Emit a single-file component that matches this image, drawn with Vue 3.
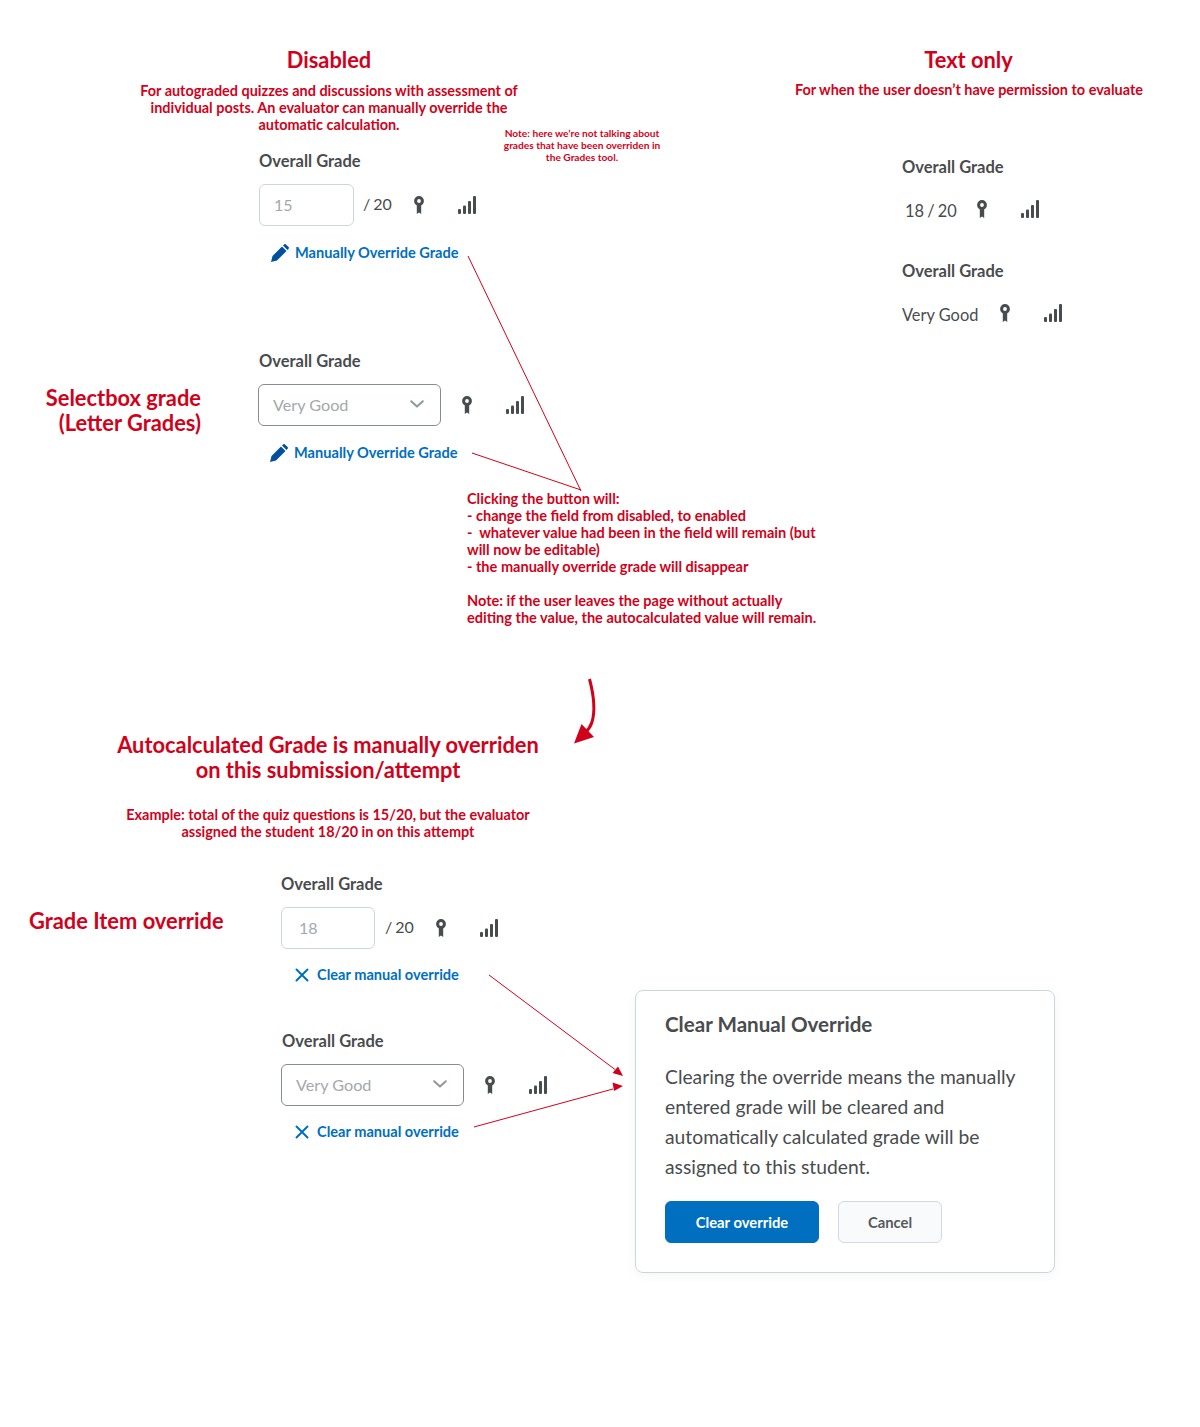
<script setup>
const lineColor = '#d0021b'
const clickingLines = [
  'Clicking the button will:',
  '- change the field from disabled, to enabled',
  '-  whatever value had been in the field will remain (but',
  'will now be editable)',
  '- the manually override grade will disappear',
]
</script>

<template>
  <div class="board">
    <svg width="0" height="0" class="defs">
      <symbol id="ribbon" viewBox="0 0 10 18">
        <circle cx="5" cy="5" r="3.400" fill="none" stroke="currentColor" stroke-width="3" />
        <path d="M2.800 8h4.400v10L5 16.400 2.800 18z" fill="currentColor" />
      </symbol>
      <symbol id="bars" viewBox="0 0 18 18">
        <rect x="0" y="13" width="3" height="5" rx="1" fill="currentColor" />
        <rect x="5" y="9.500" width="3" height="8.500" rx="1" fill="currentColor" />
        <rect x="10" y="5" width="3" height="13" rx="1" fill="currentColor" />
        <rect x="15" y="0" width="3" height="18" rx="1" fill="currentColor" />
      </symbol>
      <symbol id="pencil" viewBox="0 0 18 18">
        <path d="M0 18l1.500-6L11 2.500 15.500 7 6 16.500z M12 1.500L13.200.4c.5-.5 1.200-.5 1.700 0L17.600 3c.5.5.5 1.200 0 1.700L16.500 6z" fill="currentColor" />
      </symbol>
      <symbol id="cross" viewBox="0 0 14 14">
        <path d="M1.500 1.500l11 11M12.500 1.500l-11 11" fill="none" stroke="currentColor" stroke-width="2" stroke-linecap="round" />
      </symbol>
      <symbol id="chevron" viewBox="0 0 14 8">
        <path d="M1.200 1.200L7 6.600l5.800-5.400" fill="none" stroke="currentColor" stroke-width="2" stroke-linecap="round" stroke-linejoin="round" />
      </symbol>
    </svg>

    <div class="top">
      <div class="left">
        <div class="intro">
          <h2 class="heading">Disabled</h2>
          <p class="annot">
            For autograded quizzes and discussions with assessment of<br />
            individual posts. An evaluator can manually override the<br />
            automatic calculation.
          </p>
        </div>

        <div class="grade first">
          <p class="small-note">
            Note: here we’re not talking about<br />
            grades that have been overriden in<br />
            the Grades tool.
          </p>
          <div class="grade-label">Overall Grade</div>
          <div class="controls">
            <div class="num-input">15</div>
            <span class="out-of">/ 20</span>
            <svg class="ribbon"><use href="#ribbon" /></svg>
            <svg class="bars"><use href="#bars" /></svg>
          </div>
          <a class="action pencil-action">
            <svg class="pencil"><use href="#pencil" /></svg>
            Manually Override Grade
          </a>
        </div>

        <div class="row select-row">
          <h2 class="side-title letter">Selectbox grade<br />(Letter Grades)</h2>
          <div class="grade">
            <div class="grade-label">Overall Grade</div>
            <div class="controls">
              <div class="select-box">
                Very Good
                <svg class="chevron"><use href="#chevron" /></svg>
              </div>
              <svg class="ribbon"><use href="#ribbon" /></svg>
              <svg class="bars"><use href="#bars" /></svg>
            </div>
            <a class="action pencil-action">
              <svg class="pencil"><use href="#pencil" /></svg>
              Manually Override Grade
            </a>
          </div>
        </div>

        <div class="annot clicking">
          <div v-for="line in clickingLines" :key="line">{{ line }}</div>
          <div class="spacer"></div>
          <div>Note: if the user leaves the page without actually</div>
          <div>editing the value, the autocalculated value will remain.</div>
        </div>
      </div>

      <div class="right">
        <h2 class="heading">Text only</h2>
        <p class="annot">For when the user doesn’t have permission to evaluate</p>
        <div class="text-grade one">
          <div class="grade-label">Overall Grade</div>
          <div class="text-value">
            <span class="value">18 / 20</span>
            <svg class="ribbon"><use href="#ribbon" /></svg>
            <svg class="bars"><use href="#bars" /></svg>
          </div>
        </div>
        <div class="text-grade two">
          <div class="grade-label">Overall Grade</div>
          <div class="text-value">
            <span class="value">Very Good</span>
            <svg class="ribbon"><use href="#ribbon" /></svg>
            <svg class="bars"><use href="#bars" /></svg>
          </div>
        </div>
      </div>
    </div>

    <div class="bottom">
      <div class="bottom-left">
        <div class="auto-intro">
          <h2 class="heading tall">Autocalculated Grade is manually overriden<br />on this submission/attempt</h2>
          <p class="annot">
            Example: total of the quiz questions is 15/20, but the evaluator<br />
            assigned the student 18/20 in on this attempt
          </p>
        </div>
        <div class="row override-row">
          <h2 class="side-title">Grade Item override</h2>
          <div class="grade">
            <div class="grade-label">Overall Grade</div>
            <div class="controls">
              <div class="num-input small">18</div>
              <span class="out-of">/ 20</span>
              <svg class="ribbon"><use href="#ribbon" /></svg>
              <svg class="bars"><use href="#bars" /></svg>
            </div>
            <a class="action clear-action">
              <svg class="cross"><use href="#cross" /></svg>
              Clear manual override
            </a>
            <div class="grade-label second-label">Overall Grade</div>
            <div class="controls">
              <div class="select-box">
                Very Good
                <svg class="chevron"><use href="#chevron" /></svg>
              </div>
              <svg class="ribbon"><use href="#ribbon" /></svg>
              <svg class="bars"><use href="#bars" /></svg>
            </div>
            <a class="action clear-action">
              <svg class="cross"><use href="#cross" /></svg>
              Clear manual override
            </a>
          </div>
        </div>
      </div>

      <div class="dialog">
        <h3 class="dialog-title">Clear Manual Override</h3>
        <p class="dialog-body">
          Clearing the override means the manually<br />
          entered grade will be cleared and<br />
          automatically calculated grade will be<br />
          assigned to this student.
        </p>
        <div class="dialog-actions">
          <button class="btn primary">Clear override</button>
          <button class="btn">Cancel</button>
        </div>
      </div>
    </div>

    <!-- annotation lines over the whole board -->
    <svg class="overlay" width="1200" height="1427" viewBox="0 0 1200 1427">
      <path d="M468 256L581 491M472 453L581 490" fill="none" :stroke="lineColor" />
      <path d="M489 975L615 1069.500M474 1127L613 1089" fill="none" :stroke="lineColor" />
      <path d="M623 1076L612.500 1073 618 1066.500z" :fill="lineColor" />
      <path d="M623 1086L612.500 1082.500 614 1091z" :fill="lineColor" />
      <path d="M589.500 679C594 696 595 712 592 722 590.500 727 588 730 585 733" fill="none" :stroke="lineColor" stroke-width="3" />
      <path d="M574 743.500L581.500 724 594 737z" :fill="lineColor" />
    </svg>
  </div>
</template>

<style>
body {
  background: #fff;
}
</style>

<style scoped>
.board {
  position: relative;
  width: 1200px;
  height: 1427px;
  overflow: hidden;
  background: #fff;
  font-family: Lato, "Open Sans", sans-serif;
  color: #494c4e;
}

.defs {
  position: absolute;
}

.overlay {
  position: absolute;
  top: 0;
  left: 0;
  pointer-events: none;
}

.top {
  display: flex;
  padding-top: 48px;
}

.left {
  width: 795px;
  flex: none;
}

.right {
  width: 347px;
  text-align: center;
}

.intro {
  width: 380px;
  margin-left: 139px;
  text-align: center;
}

.heading {
  margin: 0;
  font-size: 21.850px;
  line-height: 24px;
  font-weight: 700;
  color: #d0021b;
}

.heading.tall {
  line-height: 25px;
}

.annot {
  margin: 10px 0 0;
  font-size: 14.450px;
  line-height: 17px;
  font-weight: 700;
  white-space: nowrap;
  color: #d0021b;
}

.grade {
  position: relative;
}

.grade.first {
  margin: 18px 0 0 259px;
}

.small-note {
  position: absolute;
  top: -24px;
  left: 241px;
  width: 164px;
  margin: 0;
  font-size: 10.200px;
  line-height: 12px;
  font-weight: 700;
  text-align: center;
  white-space: nowrap;
  color: #d0021b;
}

.grade-label {
  height: 20px;
  margin-bottom: 13px;
  font-size: 16.500px;
  line-height: 20px;
  font-weight: 700;
  text-align: left;
}

.controls {
  display: flex;
  align-items: center;
  height: 42px;
}

.num-input {
  box-sizing: border-box;
  width: 95px;
  height: 42px;
  padding-left: 14px;
  border: 1px solid #cdd5dc;
  border-radius: 6px;
  font-size: 16px;
  line-height: 39px;
  color: #a5a8aa;
}

.num-input.small {
  width: 94px;
  padding-left: 17px;
}

.out-of {
  width: 51px;
  margin-left: 9px;
  margin-top: -3px;
  font-size: 16px;
  word-spacing: -1px;
}

.ribbon {
  flex: none;
  width: 10px;
  height: 18px;
  color: #494c4e;
}

.bars {
  flex: none;
  width: 18px;
  height: 18px;
  margin-left: 34px;
  color: #494c4e;
}

.select-box {
  box-sizing: border-box;
  display: flex;
  align-items: center;
  justify-content: space-between;
  width: 183px;
  height: 42px;
  margin-right: 21px;
  padding: 0 16px 2px 14px;
  border: 1px solid #868c92;
  border-radius: 6px;
  font-size: 16.200px;
  color: #a5a8aa;
}

.chevron {
  width: 14px;
  height: 8px;
  color: #90989d;
}

.action {
  display: flex;
  align-items: center;
  height: 20px;
  margin-top: 17px;
  font-size: 14.600px;
  line-height: 20px;
  font-weight: 700;
  color: #006fbf;
}

.pencil-action {
  padding-left: 12px;
}

.pencil {
  width: 18px;
  height: 18px;
  margin-right: 6px;
  color: #00509e;
}

.clear-action {
  margin-top: 16px;
  margin-bottom: 1px;
  padding-left: 14px;
}

.cross {
  width: 14px;
  height: 14px;
  margin-right: 8px;
  color: #006fbf;
}

.row {
  display: flex;
}

.select-row {
  margin-top: 88px;
}

.side-title {
  flex: none;
  margin: 0;
  font-size: 21.850px;
  line-height: 25px;
  font-weight: 700;
  color: #d0021b;
}

.letter {
  width: 201px;
  margin: 34px 57px 0 0;
  text-align: right;
}

.select-row .grade-label {
  padding-left: 1px;
}

.clicking {
  margin: 27px 0 0 467px;
  font-size: 14.550px;
  white-space: pre;
}

.spacer {
  height: 17px;
}

.right .annot {
  margin-top: 9px;
}

.text-grade {
  padding-left: 107px;
}

.text-grade.one {
  margin-top: 59px;
}

.text-grade.two {
  margin-top: 40px;
}

.text-grade .grade-label {
  margin-bottom: 22px;
}

.text-value {
  display: flex;
  align-items: center;
  height: 22px;
  font-size: 16.400px;
}

.text-value .ribbon,
.text-value .bars {
  margin-top: -3px;
}

.one .value {
  width: 72px;
  margin-left: 3px;
  text-align: left;
  word-spacing: -1px;
}

.two .value {
  width: 98px;
  text-align: left;
}

.bottom {
  display: flex;
  margin-top: 106px;
}

.bottom-left {
  width: 635px;
  flex: none;
}

.auto-intro {
  width: 500px;
  margin-left: 78px;
  text-align: center;
}

.auto-intro .annot {
  margin-top: 24px;
}

.override-row {
  margin-top: 34px;
  padding-left: 29px;
}

.override-row .side-title {
  width: 252px;
  margin-top: 34px;
}

.override-row .out-of {
  margin-left: 10px;
}

.second-label {
  margin-top: 46px;
  padding-left: 1px;
}

.dialog {
  box-sizing: border-box;
  width: 420px;
  height: 283px;
  margin-top: 258px;
  padding: 21px 29px 0;
  border: 1px solid #cdd5dc;
  border-radius: 8px;
  box-shadow: 0 2px 12px rgba(86, 90, 92, 0.06);
}

.dialog-title {
  margin: 0;
  font-size: 20.600px;
  line-height: 25px;
  font-weight: 700;
}

.dialog-body {
  margin: 25px 0 0;
  font-size: 19.300px;
  line-height: 30px;
}

.dialog-actions {
  display: flex;
  gap: 19px;
  margin-top: 19px;
}

.btn {
  box-sizing: border-box;
  width: 104px;
  height: 42px;
  border: 1px solid #d3d9e3;
  border-radius: 6px;
  background: #f9fafb;
  font-family: inherit;
  font-size: 14.800px;
  font-weight: 700;
  color: #565a5c;
}

.btn.primary {
  width: 154px;
  border-color: #006fbf;
  background: #006fbf;
  color: #fff;
}
</style>
